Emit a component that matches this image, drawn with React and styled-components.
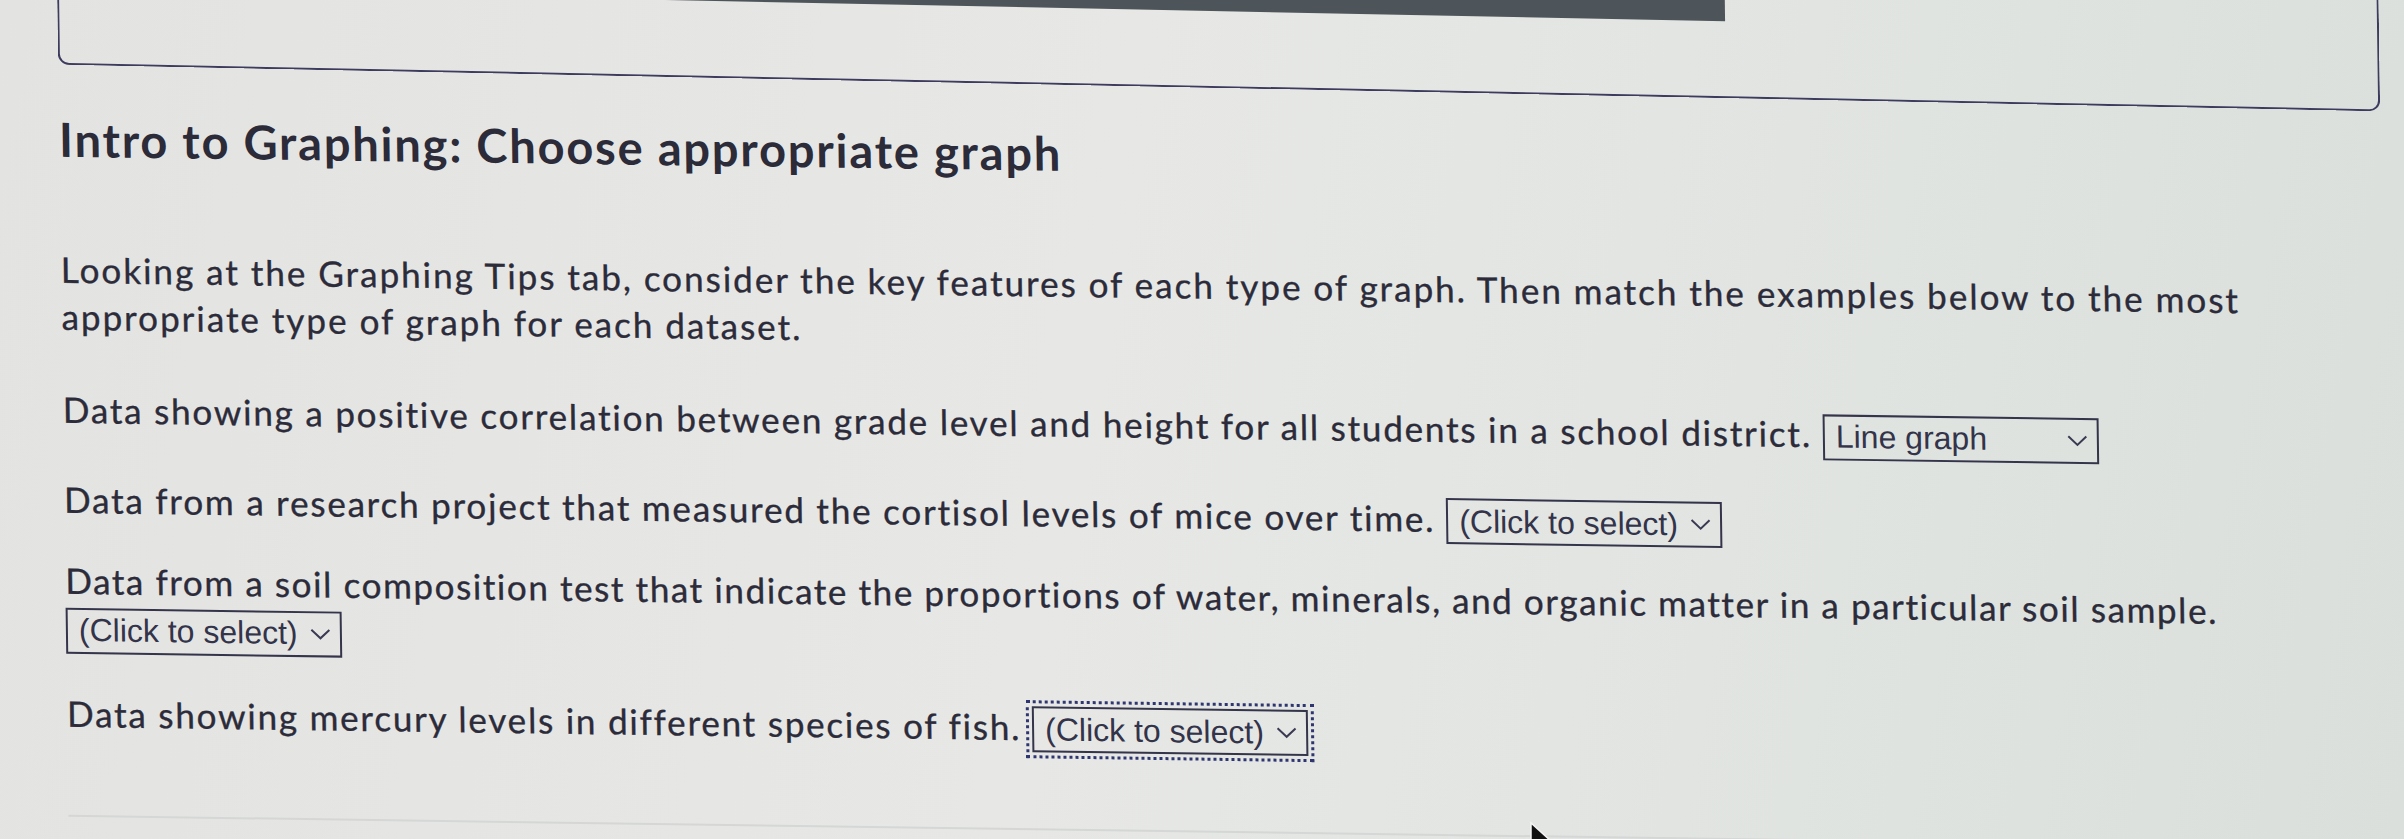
import React from 'react'
import styled, { createGlobalStyle } from 'styled-components'

const GlobalStyle = createGlobalStyle`
  html, body {
    margin: 0;
    padding: 0;
    width: 100%;
    height: 100%;
    overflow: hidden;
  }
  body {
    font-family: Lato, "Open Sans", sans-serif;
    color: #2b2a39;
  }
`

const Screen = styled.div`
  position: relative;
  width: 2404px;
  height: 839px;
  overflow: hidden;
  background: linear-gradient(100deg, #e3e4e2 0%, #e7e8e6 45%, #dfe3e0 80%, #dadfdc 100%);
`

/* the screen was photographed a little off-axis, so the sheet leans */
const Sheet = styled.div`
  box-sizing: border-box;
  width: 2404px;
  padding: 0 26px 0 56px;
  transform: skew(0.8deg, 0.8deg);
  transform-origin: 0 0;
`

const TopCard = styled.div`
  box-sizing: border-box;
  margin-top: -80px;
  height: 144px;
  border: 2px solid #3d3b5e;
  border-top: none;
  border-radius: 0 0 11px 11px;
  padding-top: 37px;
  transform: skewY(0.35deg);
  transform-origin: 0 0;
`

const Toolbar = styled.div`
  margin-left: 300px;
  width: 1366px;
  height: 30px;
  background: #4d545a;
`

const Title = styled.h1`
  margin: 46px 0 0;
  font-family: Lato, sans-serif;
  font-weight: 700;
  font-size: 47px;
  line-height: 1.2;
  letter-spacing: 1.8px;
  color: #2c2b39;
`

const Text = styled.p`
  margin: ${p => p.$top}px 0 0;
  font-family: Lato, sans-serif;
  font-size: 35px;
  line-height: 47px;
  letter-spacing: ${p => p.$track || 1.8}px;
  color: #2c2b3a;
  -webkit-text-stroke: 0.35px #2c2b3a;
`

const SelectBox = styled.span`
  display: inline-flex;
  align-items: center;
  justify-content: space-between;
  box-sizing: border-box;
  width: 276px;
  height: 46px;
  margin-left: ${p => (p.$newLine ? 0 : 11)}px;
  padding: 0 9px 0 11px;
  border: 2px solid #34344a;
  font-family: "Liberation Sans", Arial, sans-serif;
  font-size: 32px;
  letter-spacing: 0;
  color: #33334a;
  -webkit-text-stroke: 0;
  outline: ${p => (p.$focused ? '3px dotted #2e3570' : 'none')};
  outline-offset: 3px;
  cursor: pointer;
`

const Chevron = () => (
  <svg width="21" height="12" viewBox="0 0 21 12">
    <polyline points="1.5,1.5 10.5,10 19.5,1.5" fill="none" stroke="#3a3a52" strokeWidth="2" />
  </svg>
)

const Dropdown = ({ value = '(Click to select)', focused, newLine }) => (
  <SelectBox $focused={focused} $newLine={newLine}>
    <span>{value}</span>
    <Chevron />
  </SelectBox>
)

const Divider = styled.div`
  margin-top: 76px;
  height: 2px;
  background: #d4d7d5;
`

const Pointer = styled.svg`
  position: absolute;
  left: 1529px;
  top: 821px;
`

export default function App() {
  return (
    <>
      <GlobalStyle />
      <Screen>
        <Sheet>
          <TopCard>
            <Toolbar />
          </TopCard>
          <Title>Intro to Graphing: Choose appropriate graph</Title>
          <Text $top={79} $track={2}>
            Looking at the Graphing Tips tab, consider the key features of each type of graph. Then match the examples below to the most appropriate type of graph for each dataset.
          </Text>
          <Text $top={46}>
            Data showing a positive correlation between grade level and height for all students in a school district.
            <Dropdown value="Line graph" />
          </Text>
          <Text $top={40}>
            Data from a research project that measured the cortisol levels of mice over time.
            <Dropdown />
          </Text>
          <Text $top={32} $track={1.6}>
            Data from a soil composition test that indicate the proportions of water, minerals, and organic matter in a particular soil sample.
            <br />
            <Dropdown newLine />
          </Text>
          <Text $top={36}>
            Data showing mercury levels in different species of fish.
            <Dropdown focused />
          </Text>
          <Divider />
        </Sheet>
        <Pointer width="26" height="36" viewBox="0 0 26 36">
          <path d="M2 2 L2 30 L9 23 L14 34 L18 32 L13 21 L23 21 Z" fill="#111" stroke="#f4f4f4" strokeWidth="1.5" />
        </Pointer>
      </Screen>
    </>
  )
}
